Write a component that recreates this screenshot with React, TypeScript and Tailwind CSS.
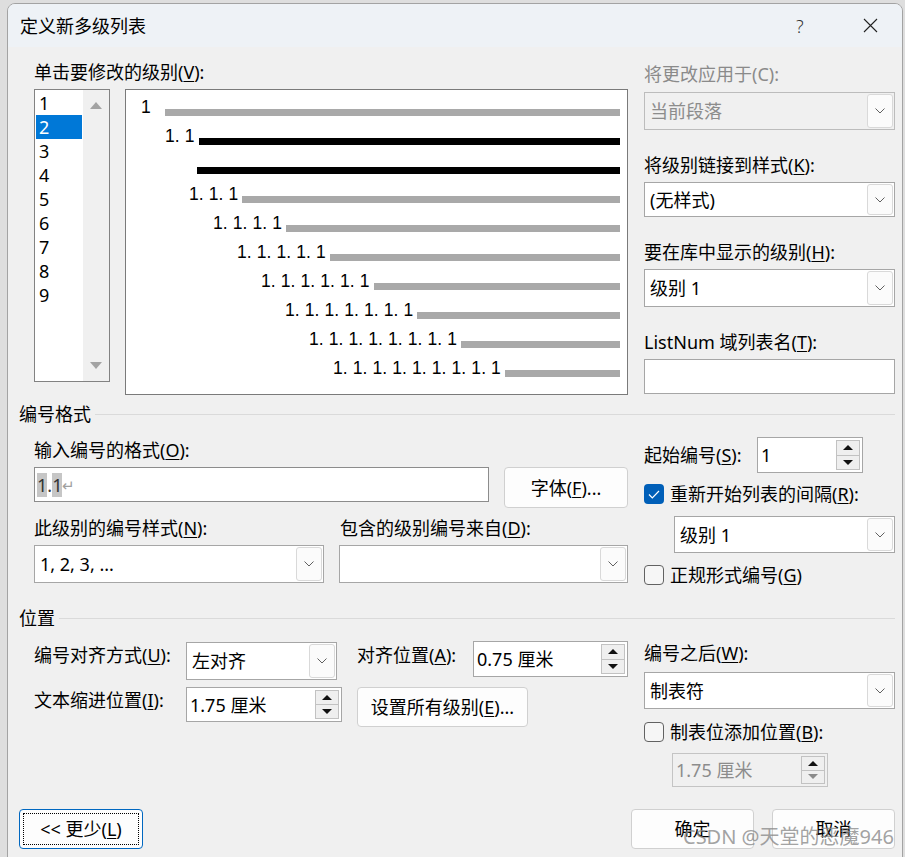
import React from "react";
import clsx from "clsx";

const Chevron = () => (
  <svg width="10" height="6" viewBox="0 0 10 6">
    <path d="M0.5 0.5 L5 5 L9.5 0.5" fill="none" stroke="#606060" strokeWidth="1" />
  </svg>
);

const Key = ({ k }: { k: string }) => <span className="underline underline-offset-2">{k}</span>;

interface ComboProps {
  className: string;
  text?: string;
  disabled?: boolean;
}

const Combo = ({ className, text, disabled }: ComboProps) => (
  <div
    className={clsx(
      "flex items-center justify-between border pl-[5px] pr-[1px] py-[1px]",
      disabled ? "bg-[#f0f0f0] border-[#bcbcbc] text-[#8c8c8c]" : "bg-white border-[#a6a6a6] text-black",
      className
    )}
  >
    <span className="truncate">{text}</span>
    <div className="flex h-full w-[26px] items-center justify-center rounded-[3px] border border-[#d9d9d9] bg-[#fbfbfb]">
      <Chevron />
    </div>
  </div>
);

const Spinner = ({ className, text, disabled }: ComboProps) => (
  <div
    className={clsx(
      "flex items-center justify-between border pl-[3px] pr-[2px] py-[2px]",
      disabled ? "bg-[#f0f0f0] border-[#c4c4c4] text-[#8c8c8c]" : "bg-white border-[#a6a6a6] text-black",
      className
    )}
  >
    <span>{text}</span>
    <div className="flex h-full w-[24px] flex-col">
      <div className="flex flex-1 items-center justify-center border border-[#c2c2c2] bg-[#efefef]">
        <svg width="10" height="5" viewBox="0 0 10 5">
          <path d="M0 5 L5 0 L10 5Z" fill="#111" />
        </svg>
      </div>
      <div className="flex flex-1 items-center justify-center border border-t-0 border-[#c2c2c2] bg-[#efefef]">
        <svg width="10" height="5" viewBox="0 0 10 5">
          <path d="M0 0 L5 5 L10 0Z" fill={disabled ? "#8a8a8a" : "#111"} />
        </svg>
      </div>
    </div>
  </div>
);

const Check = ({ checked }: { checked?: boolean }) =>
  checked ? (
    <div className="flex h-[20px] w-[20px] items-center justify-center rounded-[4px] bg-[#005fb8]">
      <svg width="12" height="9" viewBox="0 0 12 9">
        <path d="M1 4.5 L4.3 7.8 L11 1" fill="none" stroke="white" strokeWidth="1.2" />
      </svg>
    </div>
  ) : (
    <div className="h-[20px] w-[20px] rounded-[4px] border border-[#626262] bg-[#f6f6f6]" />
  );

const Button = ({ className, children }: { className: string; children: React.ReactNode }) => (
  <div
    className={clsx(
      "flex items-center justify-center rounded-[4px] border border-[#d0d0d0] bg-[#fdfdfd]",
      className
    )}
  >
    {children}
  </div>
);

const Section = ({ title }: { title: string }) => (
  <div className="flex h-[24px] items-center">
    <span>{title}</span>
    <div className="ml-[4px] h-px flex-1 bg-[#dadada]" />
  </div>
);

const previewRows = [
  { pl: "pl-[15px]", label: "1", first: true, black: false },
  { pl: "pl-[39px]", label: "1. 1", black: true },
  { pl: "pl-[71px]", label: "", black: true },
  { pl: "pl-[63px]", label: "1. 1. 1" },
  { pl: "pl-[87px]", label: "1. 1. 1. 1" },
  { pl: "pl-[111px]", label: "1. 1. 1. 1. 1" },
  { pl: "pl-[135px]", label: "1. 1. 1. 1. 1. 1" },
  { pl: "pl-[159px]", label: "1. 1. 1. 1. 1. 1. 1" },
  { pl: "pl-[183px]", label: "1. 1. 1. 1. 1. 1. 1. 1" },
  { pl: "pl-[207px]", label: "1. 1. 1. 1. 1. 1. 1. 1. 1" },
];

export default function App() {
  return (
    <div className="relative h-[857px] w-[905px] overflow-hidden bg-[#dedede] pl-[7px] pt-[3px] font-['Noto_Sans','Noto_Sans_CJK_SC',sans-serif] text-[18px] leading-[24px] text-black">
      <div className="h-[870px] w-[896px] overflow-hidden rounded-t-[8px] border border-[#a3a3a3] bg-[#f0f0f0]">
        {/* title bar */}
        <div className="flex h-[43px] items-center bg-[#eef2f6] pl-[12px]">
          <span className="flex-1">定义新多级列表</span>
          <span className="w-[66px] font-light text-[#333]">?</span>
          <div className="mr-[24px] flex h-[16px] w-[16px] items-center justify-center">
            <svg width="15" height="15" viewBox="0 0 15 15">
              <path d="M1 1 L14 14 M14 1 L1 14" stroke="#222" strokeWidth="1.1" />
            </svg>
          </div>
        </div>

        <div className="pl-[11px] pr-[7px]">
          {/* top */}
          <div className="ml-[15px] flex h-[355px] gap-[16px] pt-[13px]">
            <div className="w-[594px]">
              <div className="h-[24px]">
                单击要修改的级别(<Key k="V" />):
              </div>
              <div className="mt-[5px] flex gap-[15px]">
                <div className="flex h-[293px] w-[76px] border border-[#828282] bg-white">
                  <div className="w-[48px] pl-[1px] pt-[1px]">
                    {[1, 2, 3, 4, 5, 6, 7, 8, 9].map((n) => (
                      <div
                        key={n}
                        className={clsx(
                          "h-[24px] w-[46px] pl-[3px]",
                          n === 2 && "bg-[#0078d7] text-white"
                        )}
                      >
                        {n}
                      </div>
                    ))}
                  </div>
                  <div className="flex w-[26px] flex-col items-center justify-between bg-[#f0f0f0] py-[12px]">
                    <svg width="12" height="7" viewBox="0 0 12 7">
                      <path d="M0 7 L6 0 L12 7Z" fill="#a3a3a3" />
                    </svg>
                    <svg width="12" height="7" viewBox="0 0 12 7">
                      <path d="M0 0 L6 7 L12 0Z" fill="#a3a3a3" />
                    </svg>
                  </div>
                </div>
                <div className="h-[306px] w-[504px] overflow-hidden border border-[#7a7a7a] bg-white pr-[7px] font-['Liberation_Sans',Arial,sans-serif] text-[17.5px] leading-[17px] tracking-[0.1px]">
                  <div className="-mt-[3px]">
                    {previewRows.map((r, i) => (
                      <div key={i} className={clsx("flex h-[29px] items-end", r.pl)}>
                        {r.label && (
                          <span className={clsx("whitespace-pre", r.first ? "w-[24px]" : "mr-[4px]")}>
                            {r.label}
                          </span>
                        )}
                        <div className={clsx("h-[7px] flex-1", r.black ? "bg-black" : "bg-[#a9a9a9]")} />
                      </div>
                    ))}
                  </div>
                </div>
              </div>
            </div>

            <div className="flex w-[251px] flex-col">
              <div className="mt-[2px] h-[24px] text-[#8a8a8a]">将更改应用于(C):</div>
              <Combo className="mt-[6px] h-[38px] w-[251px]" text="当前段落" disabled />
              <div className="mt-[23px] h-[24px]">
                将级别链接到样式(<Key k="K" />):
              </div>
              <Combo className="mt-[5px] h-[35px] w-[251px]" text="(无样式)" />
              <div className="mt-[23px] h-[24px]">
                要在库中显示的级别(<Key k="H" />):
              </div>
              <Combo className="mt-[5px] h-[38px] w-[251px]" text="级别 1" />
              <div className="mt-[23px] h-[24px]">
                ListNum 域列表名(<Key k="T" />):
              </div>
              <div className="mt-[5px] h-[35px] w-[251px] border border-[#a6a6a6] bg-white" />
            </div>
          </div>

          <Section title="编号格式" />

          {/* number format */}
          <div className="ml-[15px] flex h-[180px] gap-[16px]">
            <div className="w-[594px]">
              <div className="mt-[12px] h-[24px]">
                输入编号的格式(<Key k="O" />):
              </div>
              <div className="mt-[5px] flex h-[41px] items-start gap-[15px]">
                <div className="flex h-[35px] w-[455px] items-center border border-[#8c8c8c] bg-white pl-[2px] text-[#333]">
                  <span className="bg-[#c6c6c6]">1</span>
                  <span>.</span>
                  <span className="bg-[#c6c6c6]">1</span>
                  <span className="text-[15px] text-[#a0a0a0]">↵</span>
                </div>
                <Button className="h-[41px] w-[124px]">
                  字体(<Key k="F" />)...
                </Button>
              </div>
              <div className="mt-[8px] flex h-[24px]">
                <div className="w-[306px]">
                  此级别的编号样式(<Key k="N" />):
                </div>
                <div>
                  包含的级别编号来自(<Key k="D" />):
                </div>
              </div>
              <div className="mt-[5px] flex gap-[15px]">
                <Combo className="h-[38px] w-[290px]" text="1, 2, 3, ..." />
                <Combo className="h-[38px] w-[290px]" text="" />
              </div>
            </div>

            <div className="w-[251px]">
              <div className="mt-[11px] flex h-[36px] items-center">
                <div className="w-[113px]">
                  起始编号(<Key k="S" />):
                </div>
                <Spinner className="h-[36px] w-[106px]" text="1" />
              </div>
              <div className="mt-[11px] flex h-[20px] items-center gap-[6px]">
                <Check checked />
                <span>
                  重新开始列表的间隔(<Key k="R" />):
                </span>
              </div>
              <Combo className="ml-[30px] mt-[12px] h-[37px] w-[221px]" text="级别 1" />
              <div className="mt-[12px] flex h-[20px] items-center gap-[6px]">
                <Check />
                <span>
                  正规形式编号(<Key k="G" />)
                </span>
              </div>
            </div>
          </div>

          <Section title="位置" />

          {/* position */}
          <div className="ml-[15px] flex h-[179px] gap-[16px]">
            <div className="w-[594px]">
              <div className="mt-[11px] flex h-[39px] items-start">
                <div className="mt-[2px] w-[152px]">
                  编号对齐方式(<Key k="U" />):
                </div>
                <Combo className="mt-[1px] h-[38px] w-[151px]" text="左对齐" />
                <div className="ml-[20px] mt-[2px] w-[116px]">
                  对齐位置(<Key k="A" />):
                </div>
                <Spinner className="h-[36px] w-[155px]" text="0.75 厘米" />
              </div>
              <div className="mt-[7px] flex items-start">
                <div className="mt-[1px] w-[152px]">
                  文本缩进位置(<Key k="I" />):
                </div>
                <Spinner className="h-[35px] w-[156px]" text="1.75 厘米" />
                <Button className="ml-[15px] h-[40px] w-[171px]">
                  设置所有级别(<Key k="E" />)...
                </Button>
              </div>
            </div>

            <div className="w-[251px]">
              <div className="mt-[11px] h-[24px]">
                编号之后(<Key k="W" />):
              </div>
              <Combo className="mt-[7px] h-[37px] w-[251px]" text="制表符" />
              <div className="mt-[13px] flex h-[20px] items-center gap-[6px]">
                <Check />
                <span>
                  制表位添加位置(<Key k="B" />):
                </span>
              </div>
              <Spinner className="ml-[28px] mt-[11px] h-[34px] w-[156px]" text="1.75 厘米" disabled />
            </div>
          </div>

          {/* buttons */}
          <div className="flex h-[40px] items-center justify-between">
            <div className="flex h-[40px] w-[124px] items-center justify-center rounded-[4px] border border-[#0067c0] bg-[#fdfdfd] p-[3px]">
              <div className="flex h-full w-full items-center justify-center border border-dotted border-black">
                &lt;&lt; 更少(<Key k="L" />)
              </div>
            </div>
            <div className="flex gap-[18px]">
              <Button className="h-[40px] w-[123px]">确定</Button>
              <Button className="h-[40px] w-[123px]">取消</Button>
            </div>
          </div>
        </div>
      </div>

      <div className="pointer-events-none absolute left-[683px] top-[824px] text-[20px] leading-[26px] text-[#8a8a8a]/80">
        CSDN @天堂的恶魔946
      </div>
    </div>
  );
}
